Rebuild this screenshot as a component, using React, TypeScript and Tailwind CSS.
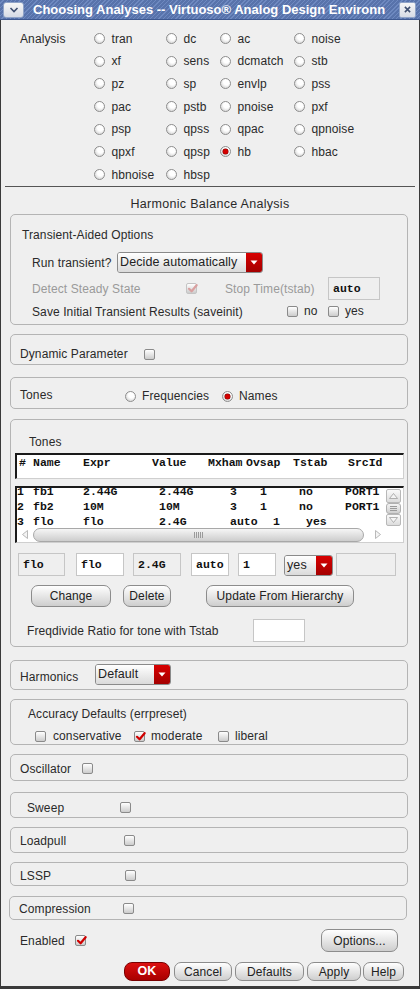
import React from "react";

const analyses = [
  "tran", "dc", "ac", "noise",
  "xf", "sens", "dcmatch", "stb",
  "pz", "sp", "envlp", "pss",
  "pac", "pstb", "pnoise", "pxf",
  "psp", "qpss", "qpac", "qpnoise",
  "qpxf", "qpsp", "hb", "hbac",
  "hbnoise", "hbsp",
];

function Radio({ on }: { on?: boolean }) {
  return (
    <span className="inline-flex h-[11px] w-[11px] shrink-0 items-center justify-center rounded-full border border-[#8e8e8e] bg-[radial-gradient(circle_at_60%_35%,#ffffff_35%,#c4c4c4_100%)]">
      {on && <span className="h-[5px] w-[5px] rounded-full bg-[#d40000] shadow-[0_0_0_0.5px_#7a0000]" />}
    </span>
  );
}

function Check({ on, dim }: { on?: boolean; dim?: boolean }) {
  return (
    <span
      className={`relative inline-block h-[11px] w-[11px] shrink-0 rounded-[2px] border bg-gradient-to-b from-[#ffffff] to-[#cccccc] ${
        dim ? "border-[#c4c4c4]" : "border-[#8a8a8a]"
      }`}
    >
      {on && (
        <svg viewBox="0 0 11 11" className="absolute left-[0px] top-[-1px] h-[11px] w-[11px]">
          <path
            d="M2 5.8 L4.6 8.3 L9.6 2.2"
            fill="none"
            stroke={dim ? "#d9a0a0" : "#d00000"}
            strokeWidth="2.2"
            strokeLinecap="round"
            strokeLinejoin="round"
          />
        </svg>
      )}
    </span>
  );
}

function Drop({ text, className }: { text: string; className: string }) {
  return (
    <div className={`flex overflow-hidden rounded-[3px] border border-[#8a8a8a] ${className}`}>
      <div className="flex flex-1 items-center bg-gradient-to-b from-[#ffffff] to-[#dadada] pl-[2px] text-[12.5px] text-[#222]">
        {text}
      </div>
      <div className="flex w-[16px] items-center justify-center bg-gradient-to-b from-[#d80000] to-[#a40000]">
        <svg viewBox="0 0 8 5" className="h-[5px] w-[8px]">
          <path d="M0.5 0.5 L7.5 0.5 L4 4.5 Z" fill="#ffffff" />
        </svg>
      </div>
    </div>
  );
}

function Btn({ children, className }: { children: React.ReactNode; className: string }) {
  return (
    <div
      className={`flex items-center justify-center rounded-[7px] border border-[#8c8c8c] bg-gradient-to-b from-[#ffffff] to-[#cecece] text-[12px] text-[#222] ${className}`}
    >
      {children}
    </div>
  );
}

function Field({ text, className }: { text?: string; className: string }) {
  return (
    <div
      className={`flex items-center border border-[#c6c6c6] pl-[4px] font-['Liberation_Mono',monospace] text-[11.5px] font-bold tracking-[0px] text-[#111] ${className}`}
    >
      {text}
    </div>
  );
}

function Box({ children, className }: { children: React.ReactNode; className: string }) {
  return (
    <div className={`w-[398px] rounded-[5px] border border-[#b4b4b4] ${className}`}>
      {children}
    </div>
  );
}

function Row({ children, className = "" }: { children: React.ReactNode; className?: string }) {
  return <div className={`flex h-[16px] items-center ${className}`}>{children}</div>;
}

export default function App() {
  return (
    <div className="relative h-[989px] w-[420px] overflow-hidden bg-[#efefef] font-['Liberation_Sans',Arial,sans-serif] text-[12px] tracking-[0.1px] text-[#2a2a2a] shadow-[inset_1px_0_0_#3a3a3a,inset_-1px_0_0_#3a3a3a,inset_0_-3px_0_#3a3a3a]">
      {/* title bar */}
      <div className="flex h-[20px] items-center border-b border-[#3d5890] bg-[repeating-linear-gradient(135deg,#5873ab_0px,#5873ab_2px,#6e89c0_2px,#6e89c0_3px)]">
        <div className="ml-[3px] flex h-[16px] w-[21px] items-center justify-center rounded-[3px] border border-[#8fa3c8] bg-gradient-to-b from-[#f6f6f6] to-[#d6dbe6]">
          <svg viewBox="0 0 10 6" className="h-[6px] w-[10px]">
            <path d="M1.5 1 L5 4.5 L8.5 1" fill="none" stroke="#3f4f70" strokeWidth="1.6" />
          </svg>
        </div>
        <div className="ml-[9px] flex-1 overflow-hidden whitespace-nowrap text-[13px] font-bold tracking-[0px] text-white">
          Choosing Analyses -- Virtuoso® Analog Design Environn
        </div>
        <div className="ml-[6px] mr-[4px] flex h-[16px] w-[17px] items-center justify-center rounded-[2px] border border-[#8fa3c8] bg-gradient-to-b from-[#f6f6f6] to-[#d6dbe6]">
          <svg viewBox="0 0 8 8" className="h-[7px] w-[7px]">
            <path d="M1 1 L7 7 M7 1 L1 7" stroke="#3f4f70" strokeWidth="1.8" />
          </svg>
        </div>
      </div>

      {/* analysis radios */}
      <div className="flex h-[166px] pt-[7.2px]">
        <div className="flex h-[22.7px] w-[94px] items-center pl-[20px]">Analysis</div>
        <div className="grid grid-cols-[72px_54px_74px_90px] auto-rows-[22.7px]">
          {analyses.map((a) => (
            <div key={a} className="flex items-center gap-[6.5px]">
              <Radio on={a === "hb"} />
              <span>{a}</span>
            </div>
          ))}
        </div>
      </div>
      <div className="mx-[5px] h-px bg-[#555555]" />

      <div className="h-[27px] pt-[10px] text-center text-[12.5px] leading-[14px] tracking-[0.3px]">
        Harmonic Balance Analysis
      </div>

      {/* transient-aided options */}
      <Box className="ml-[10px] h-[111px] pl-[11px] pt-[10px]">
        <div className="flex h-[20px] items-center">Transient-Aided Options</div>
        <div className="mt-[7px] flex h-[21px] items-center pl-[10px]">
          <span className="w-[85px] pt-[1px]">Run transient?</span>
          <Drop text="Decide automatically" className="h-[21px] w-[146px]" />
        </div>
        <div className="mt-[4px] flex h-[23px] items-center pl-[10px]">
          <span className="w-[154px] pt-[1px] text-[#9a9a9a]">Detect Steady State</span>
          <Check on dim />
          <span className="ml-[28px] w-[103px] pt-[1px] text-[#9a9a9a]">Stop Time(tstab)</span>
          <Field text="auto" className="h-[23px] w-[52px] bg-[#efefef]" />
        </div>
        <div className="mt-[1px] flex h-[20px] items-center pl-[10px]">
          <span className="w-[255px] pt-[1px]">Save Initial Transient Results (saveinit)</span>
          <Check />
          <span className="ml-[6px] w-[24px]">no</span>
          <Check />
          <span className="ml-[6px]">yes</span>
        </div>
      </Box>

      <Box className="ml-[10px] mt-[9px] h-[31px] pl-[9px] pt-[11px]">
        <Row>
          <span className="w-[124px]">Dynamic Parameter</span>
          <Check />
        </Row>
      </Box>

      <Box className="ml-[10px] mt-[12px] h-[32px] pl-[9px] pt-[9px]">
        <Row className="items-start">
          <span className="w-[105px] leading-[16px]">Tones</span>
          <div className="mt-[1px] flex h-[16px] items-center">
            <Radio />
            <span className="ml-[6px] w-[80px]">Frequencies</span>
            <Radio on />
            <span className="ml-[6px]">Names</span>
          </div>
        </Row>
      </Box>

      {/* tones table */}
      <Box className="ml-[10px] mt-[10px] h-[228px] pt-[14px]">
        <Row className="pl-[18px]">Tones</Row>
        <div className="ml-[4px] mt-[3px] h-[26px] w-[389px] border-b border-l-2 border-r border-t-2 border-b-[#cfcfcf] border-l-[#1a1a1a] border-r-[#cfcfcf] border-t-[#1a1a1a] bg-white pt-[1px] font-['Liberation_Mono',monospace] text-[11.5px] font-bold leading-[14px] tracking-[0px] text-[#111]">
          <div className="grid grid-cols-[16px_50px_69px_56px_38px_47px_55px_1fr] whitespace-nowrap">
            <span className="pl-[2px]">#</span>
            <span>Name</span>
            <span>Expr</span>
            <span>Value</span>
            <span>Mxham</span>
            <span>Ovsap</span>
            <span>Tstab</span>
            <span>SrcId</span>
          </div>
        </div>
        <div className="ml-[4px] mt-[7px] h-[57px] w-[389px] border-b border-l-2 border-r border-t-2 border-b-[#cfcfcf] border-l-[#1a1a1a] border-r-[#cfcfcf] border-t-[#1a1a1a] bg-white">
          <div className="flex h-[39px]">
            <div className="w-[369px] overflow-hidden font-['Liberation_Mono',monospace] text-[11.5px] font-bold leading-[15px] tracking-[0px] text-[#111]">
              <div className="mt-[-4px] grid grid-cols-[16px_50px_69px_56px_38px_47px_55px_1fr] whitespace-nowrap">
                <span>1</span>
                <span>fb1</span>
                <span>2.44G</span>
                <span className="pl-[7px]">2.44G</span>
                <span className="pl-[22px]">3</span>
                <span className="pl-[14px]">1</span>
                <span className="pl-[6px]">no</span>
                <span className="ml-[-3px]">PORT1</span>
                <span>2</span>
                <span>fb2</span>
                <span>10M</span>
                <span className="pl-[7px]">10M</span>
                <span className="pl-[22px]">3</span>
                <span className="pl-[14px]">1</span>
                <span className="pl-[6px]">no</span>
                <span className="ml-[-3px]">PORT1</span>
                <span>3</span>
                <span>flo</span>
                <span>flo</span>
                <span className="pl-[7px]">2.4G</span>
                <span className="pl-[22px]">auto</span>
                <span className="pl-[27px]">1</span>
                <span className="pl-[13px]">yes</span>
                <span />
              </div>
            </div>
            {/* vertical scrollbar */}
            <div className="flex w-[15px] flex-col pt-[1px]">
              <div className="flex h-[14px] items-center justify-center rounded-[2px] border border-[#b8b8b8] bg-gradient-to-b from-[#fafafa] to-[#dcdcdc]">
                <svg viewBox="0 0 9 6" className="h-[6px] w-[9px]">
                  <path d="M0.5 5.5 L4.5 0.5 L8.5 5.5 Z" fill="#f4f4f4" stroke="#a0a0a0" strokeWidth="0.8" />
                </svg>
              </div>
              <div className="flex h-[11px] flex-col items-center justify-center gap-[1px] rounded-[3px] border border-[#b0b0b0] bg-gradient-to-b from-[#f4f4f4] to-[#cfcfcf]">
                <span className="h-px w-[7px] bg-[#9a9a9a]" />
                <span className="h-px w-[7px] bg-[#9a9a9a]" />
                <span className="h-px w-[7px] bg-[#9a9a9a]" />
              </div>
              <div className="flex h-[12px] items-center justify-center rounded-[2px] border border-[#b8b8b8] bg-gradient-to-b from-[#fafafa] to-[#dcdcdc]">
                <svg viewBox="0 0 9 6" className="h-[6px] w-[9px]">
                  <path d="M0.5 0.5 L4.5 5.5 L8.5 0.5 Z" fill="#f4f4f4" stroke="#a0a0a0" strokeWidth="0.8" />
                </svg>
              </div>
            </div>
          </div>
          {/* horizontal scrollbar */}
          <div className="flex h-[15px] items-center">
            <div className="flex h-[15px] w-[16px] items-center justify-center">
              <svg viewBox="0 0 6 9" className="h-[9px] w-[6px]">
                <path d="M5.5 0.5 L0.5 4.5 L5.5 8.5 Z" fill="#f4f4f4" stroke="#a8a8a8" strokeWidth="0.8" />
              </svg>
            </div>
            <div className="flex h-[14px] w-[331px] items-center justify-center gap-[1px] rounded-full border border-[#a8a8a8] bg-gradient-to-b from-[#f6f6f6] to-[#cdcdcd]">
              <span className="h-[6px] w-px bg-[#9a9a9a]" />
              <span className="h-[6px] w-px bg-[#9a9a9a]" />
              <span className="h-[6px] w-px bg-[#9a9a9a]" />
              <span className="h-[6px] w-px bg-[#9a9a9a]" />
              <span className="h-[6px] w-px bg-[#9a9a9a]" />
            </div>
            <div className="ml-[7px] flex h-[15px] w-[14px] items-center justify-center">
              <svg viewBox="0 0 6 9" className="h-[9px] w-[6px]">
                <path d="M0.5 0.5 L5.5 4.5 L0.5 8.5 Z" fill="#f4f4f4" stroke="#a8a8a8" strokeWidth="0.8" />
              </svg>
            </div>
          </div>
        </div>

        <div className="mt-[10px] flex h-[23px] items-end">
          <Field text="flo" className="ml-[7px] h-[23px] w-[47px] bg-[#efefef]" />
          <Field text="flo" className="ml-[11px] h-[23px] w-[48px] bg-white" />
          <Field text="2.4G" className="ml-[9px] h-[23px] w-[48px] bg-[#efefef]" />
          <Field text="auto" className="ml-[10px] h-[23px] w-[38px] bg-white" />
          <Field text="1" className="ml-[9px] h-[23px] w-[38px] bg-white" />
          <Drop text="yes" className="ml-[8px] h-[21px] w-[49px]" />
          <Field className="ml-[3px] h-[23px] w-[60px] bg-[#efefef]" />
        </div>

        <div className="mt-[9px] flex h-[22px]">
          <Btn className="ml-[20px] h-[22px] w-[80px]">Change</Btn>
          <Btn className="ml-[12px] h-[22px] w-[48px]">Delete</Btn>
          <Btn className="ml-[35px] h-[22px] w-[148px]">Update From Hierarchy</Btn>
        </div>

        <div className="mt-[12px] flex h-[23px] items-center pl-[16px]">
          <span className="w-[226px] pt-[1px]">Freqdivide Ratio for tone with Tstab</span>
          <Field className="h-[23px] w-[52px] bg-white" />
        </div>
      </Box>

      <Box className="ml-[10px] mt-[13px] h-[30px] pl-[9px] pt-[3px]">
        <div className="flex h-[21px] items-start">
          <span className="mt-[5px] w-[75px] leading-[16px]">Harmonics</span>
          <Drop text="Default" className="h-[21px] w-[76px]" />
        </div>
      </Box>

      <Box className="ml-[10px] mt-[9px] h-[46px] pt-[6px]">
        <Row className="pl-[17px]">Accuracy Defaults (errpreset)</Row>
        <Row className="mt-[6px] pl-[24px]">
          <Check />
          <span className="ml-[7px] w-[81px]">conservative</span>
          <Check on />
          <span className="ml-[6px] w-[67px]">moderate</span>
          <Check />
          <span className="ml-[6px]">liberal</span>
        </Row>
      </Box>

      <Box className="ml-[10px] mt-[9px] h-[27px] pl-[9px] pt-[5px]">
        <Row>
          <span className="w-[62px] pt-[1px]">Oscillator</span>
          <Check />
        </Row>
      </Box>

      <Box className="ml-[10px] mt-[11px] h-[26px] pl-[16px] pt-[6px]">
        <Row>
          <span className="w-[93px] pt-[1px]">Sweep</span>
          <Check />
        </Row>
      </Box>

      <Box className="ml-[10px] mt-[9px] h-[26px] pl-[9px] pt-[4px]">
        <Row>
          <span className="w-[104px] pt-[1px]">Loadpull</span>
          <Check />
        </Row>
      </Box>

      <Box className="ml-[10px] mt-[9px] h-[24px] pl-[9px] pt-[4px]">
        <Row>
          <span className="w-[105px] pt-[1px]">LSSP</span>
          <Check />
        </Row>
      </Box>

      <Box className="ml-[9px] mt-[10px] h-[24px] pl-[9px] pt-[3px]">
        <Row>
          <span className="w-[104px] pt-[1px]">Compression</span>
          <Check />
        </Row>
      </Box>

      <div className="mt-[9px] flex h-[23px] items-center pl-[20px]">
        <span className="w-[55px] pt-[1px]">Enabled</span>
        <Check on />
        <Btn className="ml-[235px] h-[23px] w-[77px]">Options...</Btn>
      </div>

      <div className="mt-[10px] flex h-[19px] pl-[124px]">
        <div className="flex h-[19px] w-[46px] items-center justify-center rounded-[8px] border border-[#7a0000] bg-gradient-to-b from-[#dc1010] to-[#a80000] text-[12.5px] font-bold text-white">
          OK
        </div>
        <Btn className="ml-[4px] h-[19px] w-[58px]">Cancel</Btn>
        <Btn className="ml-[3px] h-[19px] w-[69px]">Defaults</Btn>
        <Btn className="ml-[3px] h-[19px] w-[54px]">Apply</Btn>
        <Btn className="ml-[2px] h-[19px] w-[41px]">Help</Btn>
      </div>
    </div>
  );
}
